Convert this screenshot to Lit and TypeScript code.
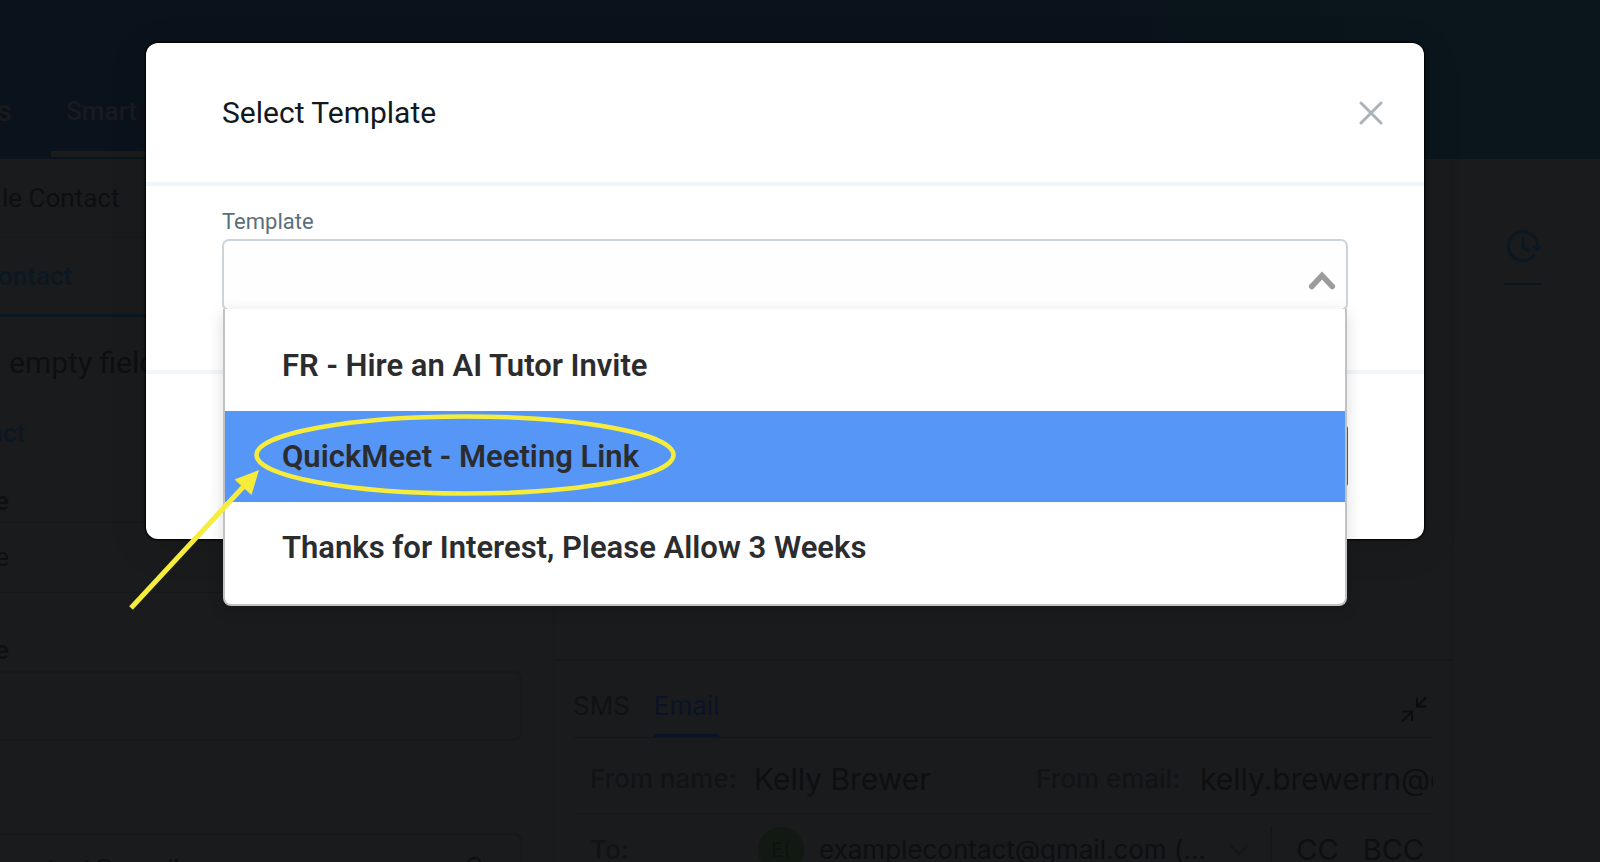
import { LitElement, html, css } from "lit";
import { customElement, state } from "lit/decorators.js";
import { classMap } from "lit/directives/class-map.js";

@customElement("template-dialog")
class TemplateDialog extends LitElement {
  @state() active = 1;

  options = [
    "FR - Hire an AI Tutor Invite",
    "QuickMeet - Meeting Link",
    "Thanks for Interest, Please Allow 3 Weeks",
  ];

  static styles = css`
    :host {
      display: block;
      font-family: Roboto, "Liberation Sans", sans-serif;
    }
    * {
      box-sizing: border-box;
    }
    .dialog {
      background: #fff;
      border-radius: 12px;
      box-shadow: 0 0 2px 1px #000, 0 8px 40px rgba(0, 0, 0, 0.1);
    }
    .head {
      display: flex;
      align-items: center;
      justify-content: space-between;
      height: 143px;
      padding: 0 40px 0 76px;
      border-bottom: 4px solid #f1f6f9;
    }
    h2 {
      margin: 0;
      font-size: 30px;
      line-height: 40px;
      font-weight: 400;
      color: #12191d;
    }
    .close {
      display: flex;
      padding: 0;
      border: 0;
      background: none;
    }
    .body {
      padding: 21px 76px 59px;
      border-bottom: 4px solid #f1f6f9;
    }
    label {
      display: block;
      font-size: 22px;
      line-height: 30px;
      margin-bottom: 2px;
      color: #5a6f79;
    }
    .field {
      position: relative;
    }
    select {
      display: block;
      width: 100%;
      height: 72px;
      padding: 0 56px 0 20px;
      border: 2px solid #cdd4d9;
      border-radius: 7px;
      background: #fefefe;
      appearance: none;
      font: inherit;
      font-size: 30px;
    }
    .caret {
      position: absolute;
      right: 11px;
      top: 30px;
      pointer-events: none;
    }
    .menu {
      position: absolute;
      z-index: 1;
      top: calc(100% - 2px);
      left: 1px;
      right: 1px;
      padding: 11px 0;
      border: 2px solid #c2c2c4;
      border-top: 0;
      border-radius: 0 0 8px 8px;
      background: #fff;
      box-shadow: 0 4px 16px rgba(0, 0, 0, 0.14);
    }
    .option {
      display: block;
      width: 100%;
      height: 91px;
      padding: 0 57px;
      border: 0;
      background: none;
      text-align: left;
      font-family: inherit;
      font-size: 31px;
      font-weight: 600;
      line-height: 40px;
      color: #2b2c2e;
    }
    .option.active {
      background: #5696f7;
    }
    .callout {
      position: absolute;
      z-index: 2;
      left: -102px;
      top: 169px;
      pointer-events: none;
    }
    .foot {
      display: flex;
      justify-content: flex-end;
      padding: 51px 76px 52px;
    }
    .save {
      height: 62px;
      padding: 0 40px;
      border: 0;
      border-radius: 4px;
      background: #0c9a14;
      color: #fff;
      font: inherit;
      font-size: 26px;
    }
  `;

  render() {
    return html`
      <section class="dialog" role="dialog" aria-labelledby="title">
        <header class="head">
          <h2 id="title">Select Template</h2>
          <button class="close" aria-label="Close">
            <svg width="26" height="26" viewBox="0 0 26 26" fill="none" stroke="#a9b3b9" stroke-width="3" stroke-linecap="round">
              <path d="M3 3 23 23M23 3 3 23" />
            </svg>
          </button>
        </header>
        <div class="body">
          <label for="template">Template</label>
          <div class="field">
            <select id="template"><option></option></select>
            <svg class="caret" width="30" height="24" viewBox="0 0 30 24" fill="none" stroke="#9c9c9c" stroke-width="5.5" stroke-linecap="round">
              <path d="M4.7 17.5 15 6.5 25.3 17.5" />
            </svg>
            <div class="menu" role="listbox" aria-label="Template">
              ${this.options.map(
                (text, i) => html`<button
                  role="option"
                  aria-selected=${i === this.active}
                  class=${classMap({ option: true, active: i === this.active })}
                  @mouseenter=${() => (this.active = i)}
                >${text}</button>`
              )}
            </div>
            <svg class="callout" width="570" height="210" viewBox="120 408 570 210" fill="none" stroke="#f6ec3c">
              <ellipse cx="465" cy="455" rx="208.5" ry="38.5" stroke-width="4.5" />
              <path d="M131 608 245 485" stroke-width="5" />
              <path d="M259 470 234.500 479.500 251.500 495Z" fill="#f6ec3c" stroke="none" />
            </svg>
          </div>
        </div>
        <footer class="foot"><button class="save" aria-label="Save"></button></footer>
      </section>
    `;
  }
}

@customElement("app-root")
class AppRoot extends LitElement {
  static styles = css`
    :host {
      display: block;
      position: relative;
      height: 100vh;
      overflow: hidden;
      background: #1a1b1d;
      font-family: Roboto, "Liberation Sans", sans-serif;
      font-size: 26px;
      line-height: 40px;
      color: #0e0f10;
    }
    * {
      box-sizing: border-box;
    }
    a {
      color: inherit;
      text-decoration: none;
    }
    .bar {
      display: flex;
      gap: 39px;
      height: 159px;
      padding-top: 91px;
      background: linear-gradient(90deg, #0a121c, #0a121b 60%, #0a161b 88%);
    }
    .brand {
      width: 12px;
      display: flex;
      justify-content: flex-end;
      font-weight: 500;
      font-size: 30px;
      color: #191b1d;
    }
    .nav {
      display: block;
      width: 190px;
      height: 66px;
      padding-left: 15px;
      border-bottom: 6px solid #191b1d;
      font-weight: 500;
      color: #191b1e;
    }
    .cols {
      display: grid;
      grid-template-columns: 553px minmax(0, 1fr) 147px;
    }
    .crumb {
      height: 79px;
      padding: 19px 2px;
      border-bottom: 1px solid #17181a;
    }
    .tab {
      display: block;
      height: 79px;
      padding-top: 18px;
      border-bottom: 3px solid #0b1720;
      font-weight: 500;
      color: #0b1822;
      text-indent: -2px;
    }
    .toggle {
      height: 92px;
      padding: 26px 9px;
      font-size: 30px;
    }
    .link {
      display: block;
      height: 46px;
      padding-top: 4px;
      margin-bottom: 25px;
      font-weight: 500;
      color: #0b1721;
      text-indent: -11px;
    }
    .cell {
      display: block;
      height: 42px;
      font-weight: 500;
      line-height: 42px;
      text-indent: -5px;
    }
    .value {
      height: 71px;
      line-height: 69px;
      border-top: 1px solid #161719;
      border-bottom: 1px solid #161719;
      margin-bottom: 36px;
      margin-right: 31px;
      text-indent: -11px;
    }
    .box {
      display: block;
      width: 522px;
      height: 70px;
      margin-bottom: 92px;
      border: 2px solid #17181a;
      border-left: 0;
      border-radius: 0 8px 8px 0;
      background: none;
    }
    .mail {
      display: flex;
      justify-content: space-between;
      width: 522px;
      height: 70px;
      padding: 14px 38px 0 47px;
      border: 2px solid #17181a;
      border-left: 0;
      border-radius: 0 8px 8px 0;
    }
    .mail svg {
      margin-top: 7px;
    }
    .panel {
      border: 1px solid #17181a;
      border-width: 0 1px;
      font-family: Inter, Roboto, sans-serif;
    }
    .feed {
      height: 502px;
      border-bottom: 2px solid #161719;
    }
    .composer {
      padding: 0 19px;
    }
    .tabs {
      display: flex;
      gap: 24px;
      height: 77px;
      border-bottom: 1px solid #151618;
      color: #111213;
    }
    .tabs a {
      height: 76px;
      padding-top: 25px;
    }
    .tabs .on {
      color: #0b1327;
      border-bottom: 3px solid #0b1327;
    }
    .tabs svg {
      margin: 34px 5px 0 auto;
    }
    .from {
      display: flex;
      height: 76px;
      padding: 21px 0 0 17px;
      border-bottom: 1px solid #161719;
      overflow: hidden;
      white-space: nowrap;
      font-size: 30px;
    }
    .from > *,
    .to > * {
      flex: none;
    }
    .key {
      font-size: 26px;
      font-weight: 500;
      color: #121315;
    }
    .name {
      width: 164px;
    }
    .email {
      width: 164px;
    }
    .person {
      width: 282px;
    }
    .to {
      display: flex;
      align-items: center;
      height: 71px;
      padding-left: 17px;
      white-space: nowrap;
    }
    .to .key {
      width: 168px;
    }
    .avatar {
      width: 46px;
      height: 46px;
      margin-right: 15px;
      border-radius: 50%;
      background: #111912;
      color: #0d130f;
      font-size: 20px;
      line-height: 46px;
      text-align: center;
    }
    .to svg {
      margin-left: auto;
      margin-right: 20px;
    }
    .copy {
      display: flex;
      gap: 24px;
      height: 48px;
      padding: 4px 9px 0 24px;
      border-left: 2px solid #151618;
      font-size: 29px;
    }
    .side {
      padding-top: 70px;
      padding-left: 51px;
    }
    .clock {
      display: flex;
      justify-content: center;
      width: 38px;
      height: 56px;
      border-bottom: 2px solid #0b161f;
    }
    .overlay {
      position: absolute;
      inset: 0;
      padding: 43px 176px 0 146px;
    }
  `;

  render() {
    return html`
      <nav class="bar">
        <span class="brand">s</span>
        <a class="nav" href="#">Smart</a>
      </nav>
      <main class="cols">
        <div>
          <div class="crumb">le Contact</div>
          <a class="tab" href="#">ontact</a>
          <div class="toggle">empty field</div>
          <a class="link" href="#">act</a>
          <span class="cell">e</span>
          <div class="value">le</div>
          <label class="cell" for="field">e</label>
          <input id="field" class="box" />
          <div class="mail">
            <span>tact@gmail</span>
            <svg width="16" height="24" viewBox="0 0 16 24" fill="none" stroke="#0e0f10" stroke-width="2">
              <path d="M2 9C2 4 5 2 9 2s6 3 5 6L8 18" />
            </svg>
          </div>
        </div>
        <section class="panel">
          <div class="feed"></div>
          <div class="composer">
            <div class="tabs">
              <a href="#">SMS</a>
              <a class="on" href="#">Email</a>
              <svg width="28" height="28" viewBox="0 0 28 28" fill="none" stroke="#0b0c0d" stroke-width="2">
                <path d="M17 2.500V11.500H26.500M17 11.500 26 2.500M2.500 16.500H12V26M12 16.500 2.500 26" />
              </svg>
            </div>
            <div class="from">
              <span class="key name">From name:</span>
              <span class="person">Kelly Brewer</span>
              <span class="key email">From email:</span>
              <span class="address">kelly.brewerrn@gmail.com</span>
            </div>
            <div class="to">
              <span class="key">To:</span>
              <span class="avatar">E(</span>
              <span>examplecontact@gmail.com (...</span>
              <svg width="22" height="14" viewBox="0 0 22 14" fill="none" stroke="#151618" stroke-width="2">
                <path d="M2 2 11 11.500 20 2" />
              </svg>
              <div class="copy"><span>CC</span><span>BCC</span></div>
            </div>
          </div>
        </section>
        <aside class="side">
          <a class="clock" href="#" aria-label="History">
            <svg width="38" height="36" viewBox="0 0 38 36" fill="none" stroke="#0b1821" stroke-width="3">
              <path d="M30.500 26A14.500 14.500 0 1 1 33.500 17" />
              <path d="M28 17h10l-5 5.500z" fill="#0b1821" stroke="none" />
              <path d="M19 9.500V18l5.500 4" stroke-linecap="round" />
            </svg>
          </a>
        </aside>
      </main>
      <div class="overlay"><template-dialog></template-dialog></div>
    `;
  }
}
